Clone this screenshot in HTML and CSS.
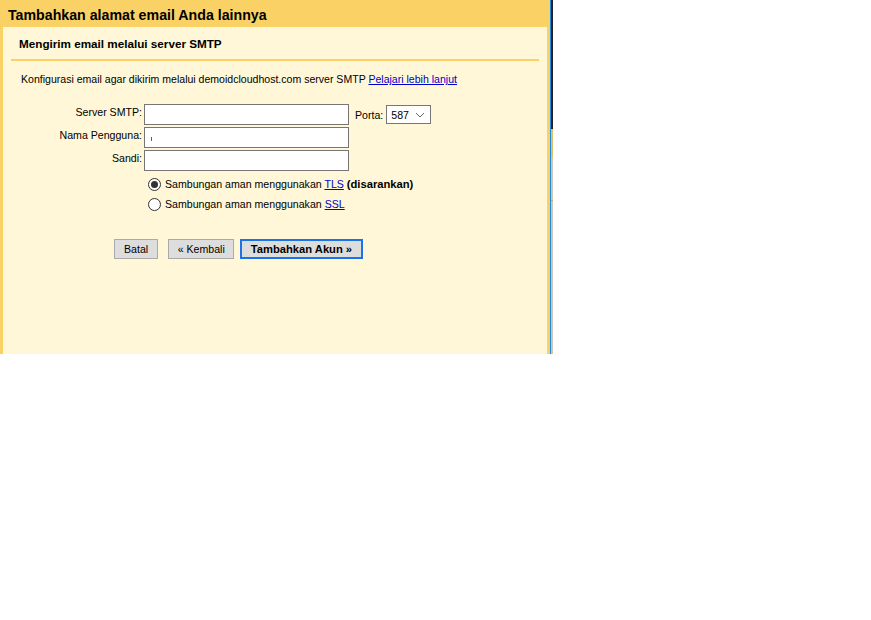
FILE: index.html
```html
<!DOCTYPE html>
<html lang="id">
<head>
<meta charset="utf-8">
<title>Tambahkan alamat email Anda lainnya</title>
<link rel="stylesheet" href="styles.css">
</head>
<body>
<div class="window">
  <div class="frame">
    <div class="header">Tambahkan alamat email Anda lainnya</div>
    <div class="section">
      <div class="subhead">Mengirim email melalui server SMTP</div>
      <p class="desc">Konfigurasi email agar dikirim melalui demoidcloudhost.com server SMTP <a href="#" class="link">Pelajari lebih lanjut</a></p>
      <div class="form">
        <div class="row">
          <label class="label">Server SMTP:</label>
          <input class="field" type="text">
          <span class="porta">Porta:</span>
          <div class="select"><span>587</span>
            <svg class="chev" width="10" height="6" viewBox="0 0 10 6"><path d="M1 1 L5 5 L9 1" fill="none" stroke="#666" stroke-width="1"/></svg>
          </div>
        </div>
        <div class="row">
          <label class="label">Nama Pengguna:</label>
          <div class="field filled"><span class="caret"></span></div>
        </div>
        <div class="row">
          <label class="label">Sandi:</label>
          <input class="field" type="password">
        </div>
        <div class="radios">
          <div class="radio-row"><span class="radio checked"></span><span>Sambungan aman menggunakan <a href="#" class="link">TLS</a> <b class="rec">(disarankan)</b></span></div>
          <div class="radio-row"><span class="radio"></span><span>Sambungan aman menggunakan <a href="#" class="link">SSL</a></span></div>
        </div>
        <div class="buttons">
          <button class="btn">Batal</button>
          <button class="btn back">« Kembali</button>
          <button class="btn primary">Tambahkan Akun »</button>
        </div>
      </div>
    </div>
  </div>
  <div class="edge-blue"></div>
  <div class="edge-rest"></div>
</div>
</body>
</html>
```

FILE: styles.css
```css
html, body {
  margin: 0;
  padding: 0;
  background: #ffffff;
}
body {
  font-family: "Liberation Sans", Arial, sans-serif;
  color: #000;
}
.window {
  display: flex;
  width: 553px;
  height: 354px;
}
.frame {
  box-sizing: border-box;
  width: 550px;
  height: 354px;
  background: #fff7d7;
  border-left: 3px solid #fad165;
  border-right: 3px solid #fad165;
  display: flex;
  flex-direction: column;
}
.edge-blue {
  width: 1px;
  background: #1e88e5;
}
.edge-rest {
  width: 2px;
  background: linear-gradient(to bottom, #222 0, #222 129px, #e3bf5c 129px, #e3bf5c 157px, #cfc8b4 157px, #cfc8b4 200px, #e0a050 200px, #e0a050 201px, #cfc8b4 201px);
}
.header {
  height: 27px;
  margin-left: -3px;
  padding-left: 8px;
  background: #fad165;
  font-size: 14.2px;
  font-weight: bold;
  line-height: 30px;
}
.section {
  margin: 0 8px;
}
.subhead {
  height: 32px;
  line-height: 33px;
  padding-left: 8px;
  font-size: 11.7px;
  font-weight: bold;
  border-bottom: 2px solid #fad165;
}
.desc {
  margin: 11px 0 0 10px;
  font-size: 10.55px;
  line-height: 14px;
}
.link {
  color: #0000cc;
  text-decoration: underline;
}
.form {
  margin-top: 18px;
  font-size: 10.6px;
}
.row {
  display: flex;
  align-items: center;
  height: 21px;
  margin-bottom: 2px;
}
.label {
  width: 131px;
  text-align: right;
  margin-right: 2px;
  align-self: flex-start;
  line-height: 17px;
}
.field {
  box-sizing: border-box;
  width: 205px;
  height: 21px;
  margin: 0;
  padding: 0 3px;
  border: 1px solid #767676;
  background: #fff;
  font: inherit;
  outline: none;
}
.filled {
  display: flex;
  align-items: center;
}
.caret {
  width: 1px;
  height: 4px;
  margin-left: 3px;
  margin-top: 2px;
  background: #c33;
}
.porta {
  margin-left: 6px;
  margin-right: 3px;
}
.select {
  box-sizing: border-box;
  width: 45px;
  height: 19px;
  border: 1px solid #767676;
  background: #fff;
  display: flex;
  align-items: center;
  justify-content: space-between;
  padding: 0 5px 0 4px;
}
.chev {
  display: block;
}
.radios {
  margin-left: 137px;
  margin-top: 3px;
}
.radio-row {
  display: flex;
  align-items: center;
  height: 20px;
}
.rec {
  font-size: 11.2px;
}
.radio {
  box-sizing: border-box;
  width: 13px;
  height: 13px;
  border: 1px solid #333;
  border-radius: 50%;
  background: #fff;
  margin-left: 0;
  margin-right: 4px;
  display: flex;
  align-items: center;
  justify-content: center;
}
.radio.checked::after {
  content: "";
  width: 7px;
  height: 7px;
  border-radius: 50%;
  background: #333;
}
.buttons {
  display: flex;
  margin-top: 25px;
  margin-left: 103px;
}
.btn {
  box-sizing: border-box;
  height: 20px;
  padding: 0 9px;
  margin: 0 10px 0 0;
  border: 1px solid #aaa;
  background: #ddd;
  font-family: "Liberation Sans", Arial, sans-serif;
  font-size: 10.6px;
  color: #000;
  line-height: 18px;
}
.btn.back {
  padding: 0 8.5px;
  margin-right: 6px;
}
.btn.primary {
  border: 2px solid #1a73e8;
  font-weight: bold;
  font-size: 11.2px;
  padding: 0 8.5px;
  line-height: 16px;
}
```
